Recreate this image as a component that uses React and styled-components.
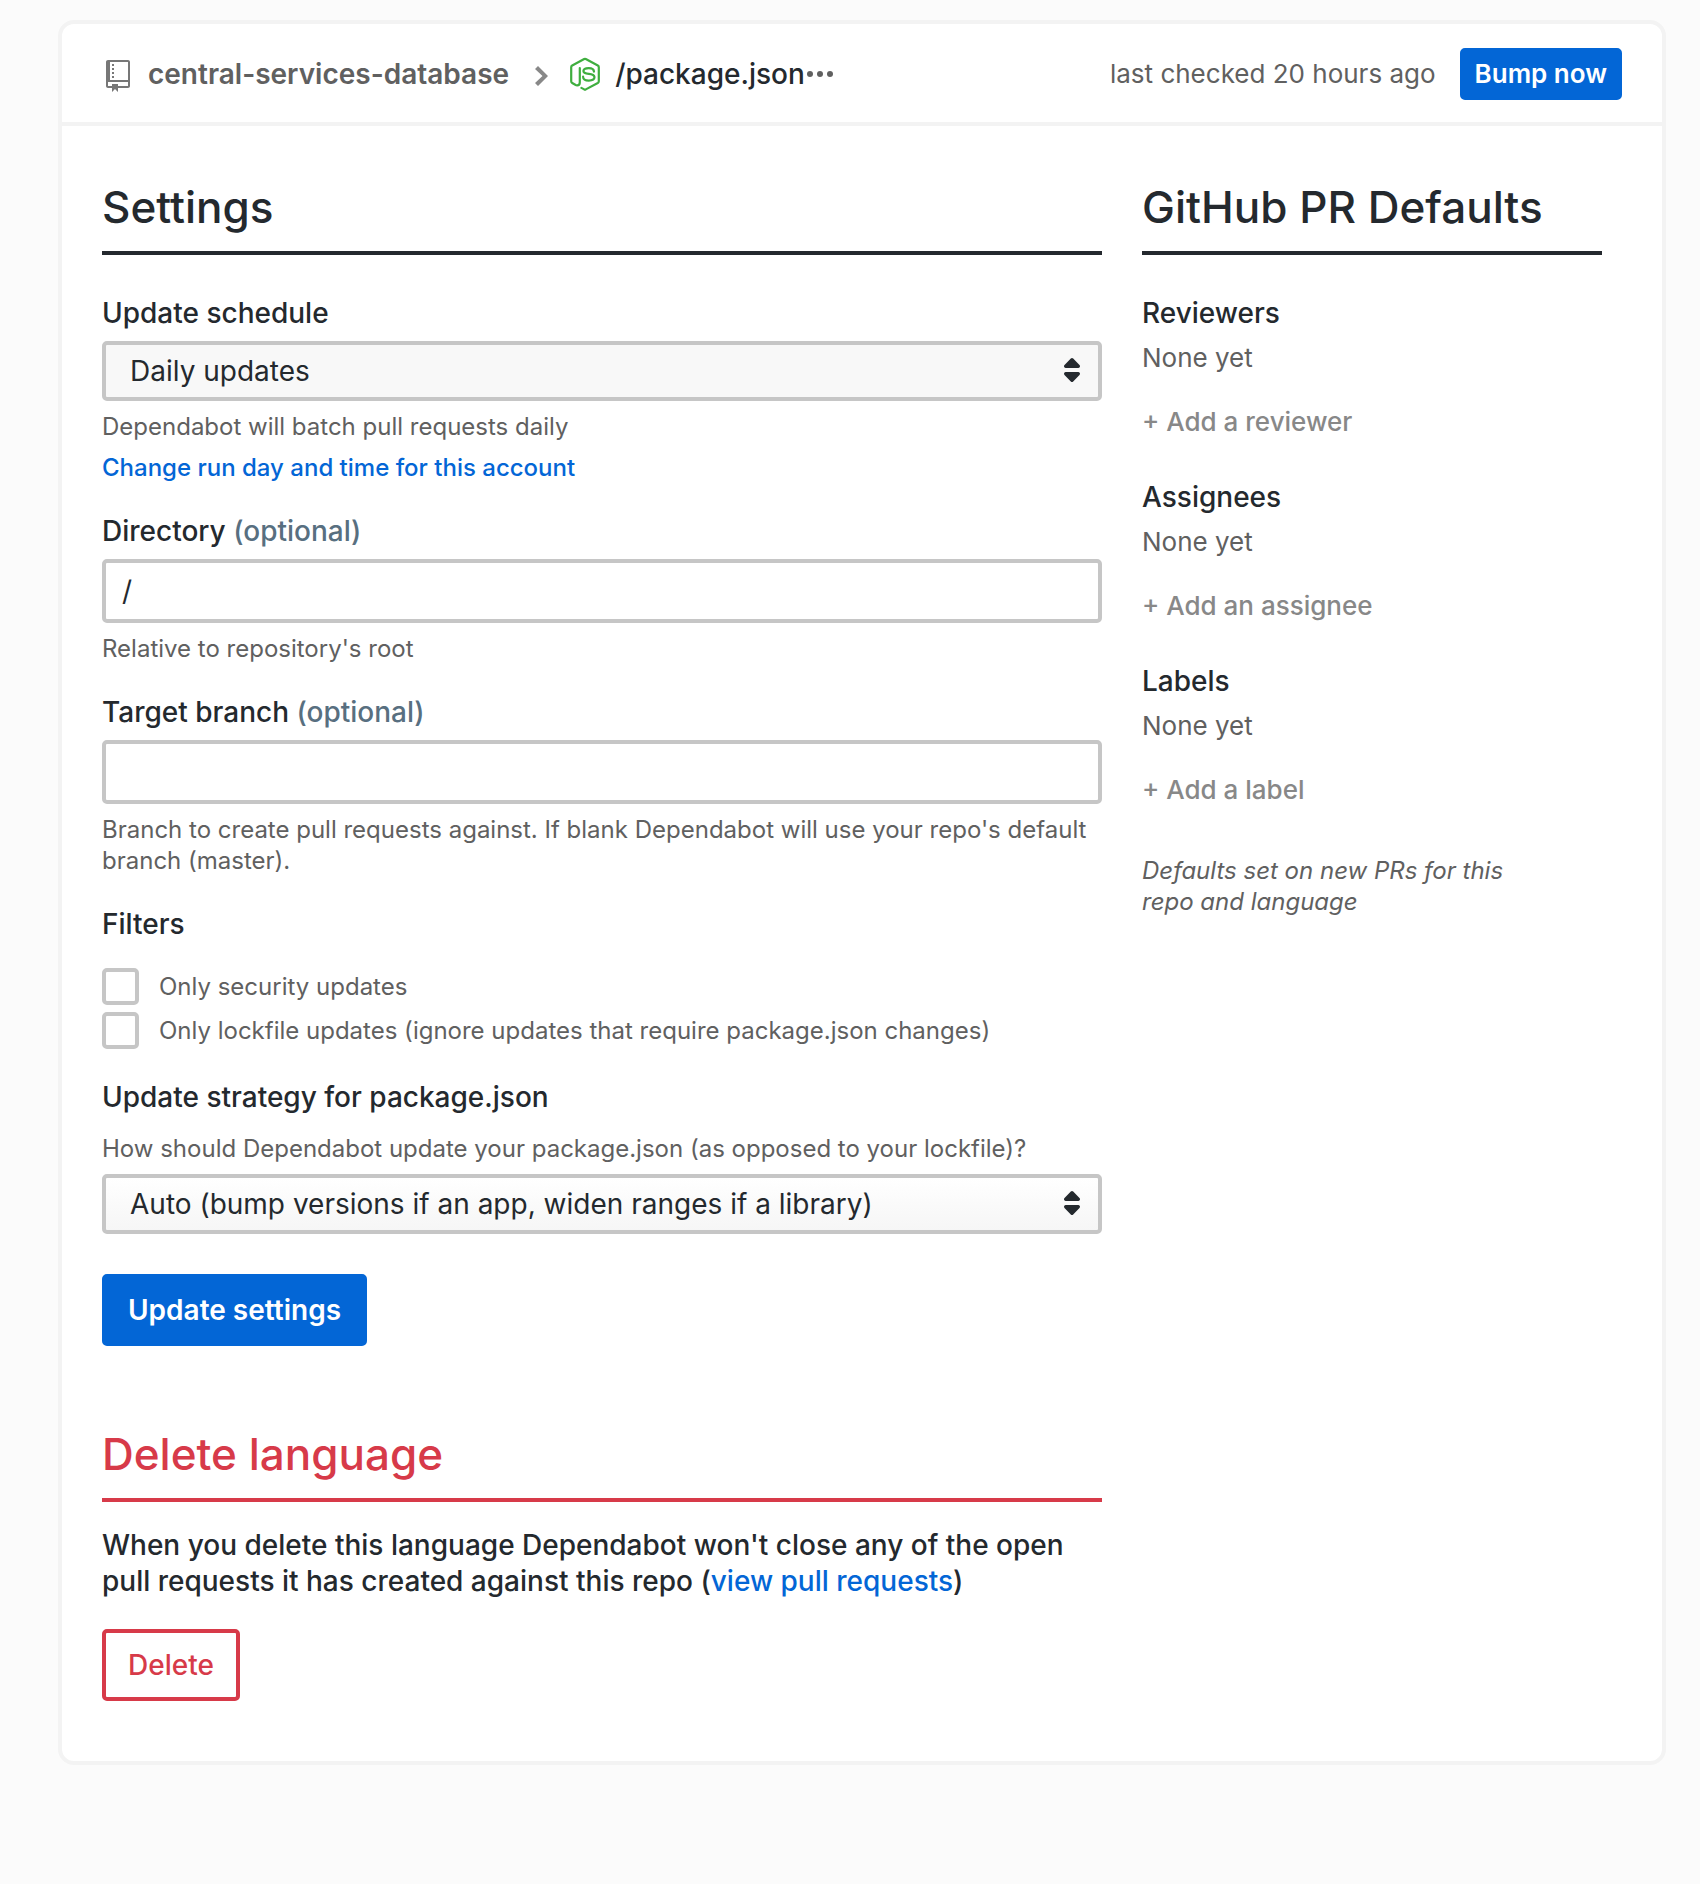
import React from "react";
import styled, { createGlobalStyle, css } from "styled-components";

const color = {
  text: "#24292e",
  muted: "#606060",
  faint: "#888888",
  slate: "#586f80",
  blue: "#0366d6",
  red: "#d73a49",
  control: "#c6c6c6",
  line: "#f3f3f3",
};

const GlobalStyle = createGlobalStyle`
  *, *::before, *::after { box-sizing: border-box; }
  body {
    margin: 0;
    background: #fbfbfb;
    color: ${color.text};
    font-family: Inter, "Liberation Sans", sans-serif;
    font-size: 28px;
    line-height: 36px;
  }
  h1, h2, h3, p { margin: 0; }
  button, input, select { font: inherit; color: inherit; }
  a { text-decoration: none; }
`;

const Card = styled.main`
  margin: 20px 34px 40px 58px;
  background: #ffffff;
  border: 4px solid ${color.line};
  border-radius: 16px;
`;

const Header = styled.header`
  display: flex;
  align-items: center;
  justify-content: space-between;
  gap: 24px;
  padding: 24px 40px 22px;
  border-bottom: 4px solid ${color.line};
`;

const Crumbs = styled.nav`
  display: flex;
  align-items: center;
  color: ${color.faint};
`;

const RepoLink = styled.a`
  display: flex;
  align-items: center;
  gap: 18px;
  padding: 0 24px 0 4px;
  color: ${color.muted};
  font-weight: 600;

  svg { color: #777777; }
`;

const FileName = styled.h1`
  display: flex;
  align-items: center;
  gap: 14px;
  padding-left: 20px;
  color: ${color.text};
  font-size: 28px;
  font-weight: 500;
`;

const MoreButton = styled.button`
  display: flex;
  padding: 4px 2px;
  border: 0;
  background: none;
  color: ${color.muted};
`;

const Status = styled.div`
  display: flex;
  align-items: center;
  gap: 24px;
  color: ${color.muted};
  font-size: 26px;
`;

const Button = styled.button`
  padding: 14px 22px;
  border: 4px solid ${color.blue};
  border-radius: 5px;
  background: ${color.blue};
  color: #ffffff;
  font-weight: 600;
  line-height: 36px;

  ${({ $compact }) => $compact && css`
    padding: 4px 11px;
    font-size: 26px;
  `}

  ${({ $danger }) => $danger && css`
    border-color: ${color.red};
    background: #ffffff;
    color: ${color.red};
    font-weight: 500;
  `}
`;

const Columns = styled.div`
  display: grid;
  grid-template-columns: 1000fr 460fr;
  gap: 40px;
  padding: 53px 60px 60px 40px;
`;

const Title = styled.h2`
  padding-bottom: 16px;
  border-bottom: 4px solid currentColor;
  color: ${({ $danger }) => ($danger ? color.red : color.text)};
  font-size: 44px;
  font-weight: 500;
  line-height: 56px;
`;

const Form = styled.form`
  display: flex;
  flex-direction: column;
  align-items: stretch;
  gap: 30px;
  padding: 40px 0 80px;
`;

const Field = styled.div`
  display: flex;
  flex-direction: column;
  gap: 10px;
`;

const labelText = css`
  padding: 0;
  font-size: 28px;
  font-weight: 500;
  line-height: 36px;
`;

const Label = styled.label`
  ${labelText}
`;

const Optional = styled.span`
  color: ${color.slate};
`;

const Help = styled.p`
  padding-top: ${({ $spaced }) => ($spaced ? "8px" : "0")};
  color: ${color.muted};
  font-size: 24px;
  line-height: 31px;
`;

const Link = styled.a`
  color: ${color.blue};
  font-weight: 500;
`;

const SelectBox = styled.div`
  position: relative;

  svg {
    position: absolute;
    top: 17px;
    right: 22px;
    pointer-events: none;
  }
`;

const Select = styled.select`
  display: block;
  width: 100%;
  height: 60px;
  padding: 0 60px 0 24px;
  appearance: none;
  border: 4px solid ${color.control};
  border-radius: 5px;
  background: ${({ $plain }) => ($plain ? "#f8f8f8" : "linear-gradient(#ffffff, #f6f6f6)")};
`;

const TextInput = styled.input`
  width: 100%;
  height: 64px;
  padding: 0 16px;
  border: 4px solid ${color.control};
  border-radius: 5px;
  background: #ffffff;
`;

const Filters = styled.fieldset`
  display: flex;
  flex-direction: column;
  gap: 7px;
  min-width: 0;
  margin: 0;
  padding: 0;
  border: 0;
`;

const Legend = styled.legend`
  ${labelText}
  margin-bottom: 26px;
`;

const CheckRow = styled.label`
  display: flex;
  align-items: center;
  gap: 20px;
  color: ${color.muted};
  font-size: 24px;
`;

const Checkbox = styled.input`
  width: 37px;
  height: 37px;
  margin: 0;
  appearance: none;
  border: 4px solid ${color.control};
  border-radius: 5px;
  background: #ffffff;

  &:checked { background: ${color.blue}; }
`;

const FormActions = styled.div`
  display: flex;
  padding-top: 10px;
`;

const DeleteNote = styled.p`
  padding: 25px 0 30px;
  font-weight: 500;
`;

const Defaults = styled.div`
  display: flex;
  flex-direction: column;
  gap: 40px;
  padding: 40px 0 48px;
`;

const DefaultGroup = styled.section`
  display: flex;
  flex-direction: column;
  align-items: flex-start;
  font-size: 26px;
  line-height: 34px;
`;

const GroupTitle = styled.h3`
  ${labelText}
`;

const Empty = styled.p`
  padding: 10px 0 30px;
  color: ${color.muted};
`;

const AddButton = styled.button`
  padding: 0;
  border: 0;
  background: none;
  color: ${color.faint};
  font-weight: 500;
`;

const Footnote = styled(Help)`
  padding-right: 60px;
  font-style: italic;
`;

const RepoIcon = () => (
  <svg width="24" height="36" viewBox="0 -2 12 18" fill="currentColor" aria-hidden="true">
    <path d="M4 9H3V8h1v1zm0-3H3v1h1V6zm0-2H3v1h1V4zm0-2H3v1h1V2zm8-1v12c0 .55-.45 1-1 1H6v2l-1.5-1.5L3 16v-2H1c-.55 0-1-.45-1-1V1c0-.55.45-1 1-1h10c.55 0 1 .45 1 1zm-1 10H1v2h2v-1h3v1h5v-2zm0-10H2v9h9V1z" />
  </svg>
);

const ChevronIcon = () => (
  <svg width="16" height="36" viewBox="0 -2 8 18" fill="currentColor" aria-hidden="true">
    <path d="M7.5 8l-5 5L1 11.5 4.75 8 1 4.5 2.5 3l5 5z" />
  </svg>
);

const NodeIcon = () => (
  <svg width="32" height="34" viewBox="0 0 32 34" fill="none" stroke="#3fae3f" strokeWidth="2.2" strokeLinecap="round" strokeLinejoin="round" aria-hidden="true">
    <path d="M10.800 11v14.200q0 3.200-2.600 3.200-1 0-1.900-.6L3.200 26q-1-.6-1-1.800V10.200q0-1.100 1-1.700L15.200 2q.8-.4 1.600 0L28.800 8.500q1 .6 1 1.700V24.200q0 1.200-1 1.800L16.800 32.400q-.8.400-1.600 0L12.400 30.900" />
    <path d="M25 14.600q-.2-3.500-5.300-3.500t-5.300 3q0 2.300 5.400 2.800t5.700 3.200q0 3.500-5.700 3.500t-5.700-3.900" />
  </svg>
);

const MoreIcon = () => (
  <svg width="26" height="6" viewBox="0 0 26 6" fill="currentColor" aria-hidden="true">
    <circle cx="3" cy="3" r="3" />
    <circle cx="13" cy="3" r="3" />
    <circle cx="23" cy="3" r="3" />
  </svg>
);

const SortIcon = () => (
  <svg width="16" height="24" viewBox="0 0 16 24" fill={color.text} aria-hidden="true">
    <path d="M6.800.5q1.200-1 2.400 0L15.500 7q.8 1 .3 2t-1.600 1H1.800Q.7 10 .2 9t.3-2z" />
    <path d="M6.800 23.500q1.200 1 2.400 0L15.500 17q.8-1 .3-2t-1.600-1H1.800Q.7 14 .2 15t.3 2z" />
  </svg>
);

const defaults = [
  { title: "Reviewers", action: "+ Add a reviewer" },
  { title: "Assignees", action: "+ Add an assignee" },
  { title: "Labels", action: "+ Add a label" },
];

export default function App() {
  return (
    <>
      <GlobalStyle />
      <Card>
        <Header>
          <Crumbs aria-label="Breadcrumb">
            <RepoLink href="#repo">
              <RepoIcon />
              central-services-database
            </RepoLink>
            <ChevronIcon />
            <FileName>
              <NodeIcon />
              /package.json
            </FileName>
            <MoreButton type="button" aria-label="More actions">
              <MoreIcon />
            </MoreButton>
          </Crumbs>
          <Status>
            <span>last checked 20 hours ago</span>
            <Button type="button" $compact>Bump now</Button>
          </Status>
        </Header>

        <Columns>
          <div>
            <Title>Settings</Title>
            <Form onSubmit={(event) => event.preventDefault()}>
              <Field>
                <Label htmlFor="schedule">Update schedule</Label>
                <SelectBox>
                  <Select id="schedule" $plain>
                    <option>Daily updates</option>
                  </Select>
                  <SortIcon />
                </SelectBox>
                <Help>Dependabot will batch pull requests daily</Help>
                <Help>
                  <Link href="#schedule">Change run day and time for this account</Link>
                </Help>
              </Field>

              <Field>
                <Label htmlFor="directory">
                  Directory <Optional>(optional)</Optional>
                </Label>
                <TextInput id="directory" type="text" defaultValue="/" />
                <Help>Relative to repository's root</Help>
              </Field>

              <Field>
                <Label htmlFor="branch">
                  Target branch <Optional>(optional)</Optional>
                </Label>
                <TextInput id="branch" type="text" />
                <Help>
                  Branch to create pull requests against. If blank Dependabot will use your repo's
                  default branch (master).
                </Help>
              </Field>

              <Filters>
                <Legend>Filters</Legend>
                <CheckRow>
                  <Checkbox type="checkbox" />
                  Only security updates
                </CheckRow>
                <CheckRow>
                  <Checkbox type="checkbox" />
                  Only lockfile updates (ignore updates that require package.json changes)
                </CheckRow>
              </Filters>

              <Field>
                <Label htmlFor="strategy">Update strategy for package.json</Label>
                <Help $spaced>
                  How should Dependabot update your package.json (as opposed to your lockfile)?
                </Help>
                <SelectBox>
                  <Select id="strategy">
                    <option>Auto (bump versions if an app, widen ranges if a library)</option>
                  </Select>
                  <SortIcon />
                </SelectBox>
              </Field>

              <FormActions>
                <Button type="submit">Update settings</Button>
              </FormActions>
            </Form>

            <Title $danger>Delete language</Title>
            <DeleteNote>
              When you delete this language Dependabot won't close any of the open pull requests it
              has created against this repo (<Link href="#pulls">view pull requests</Link>)
            </DeleteNote>
            <Button type="button" $danger>Delete</Button>
          </div>

          <aside>
            <Title>GitHub PR Defaults</Title>
            <Defaults>
              {defaults.map(({ title, action }) => (
                <DefaultGroup key={title}>
                  <GroupTitle>{title}</GroupTitle>
                  <Empty>None yet</Empty>
                  <AddButton type="button">{action}</AddButton>
                </DefaultGroup>
              ))}
            </Defaults>
            <Footnote>Defaults set on new PRs for this repo and language</Footnote>
          </aside>
        </Columns>
      </Card>
    </>
  );
}
